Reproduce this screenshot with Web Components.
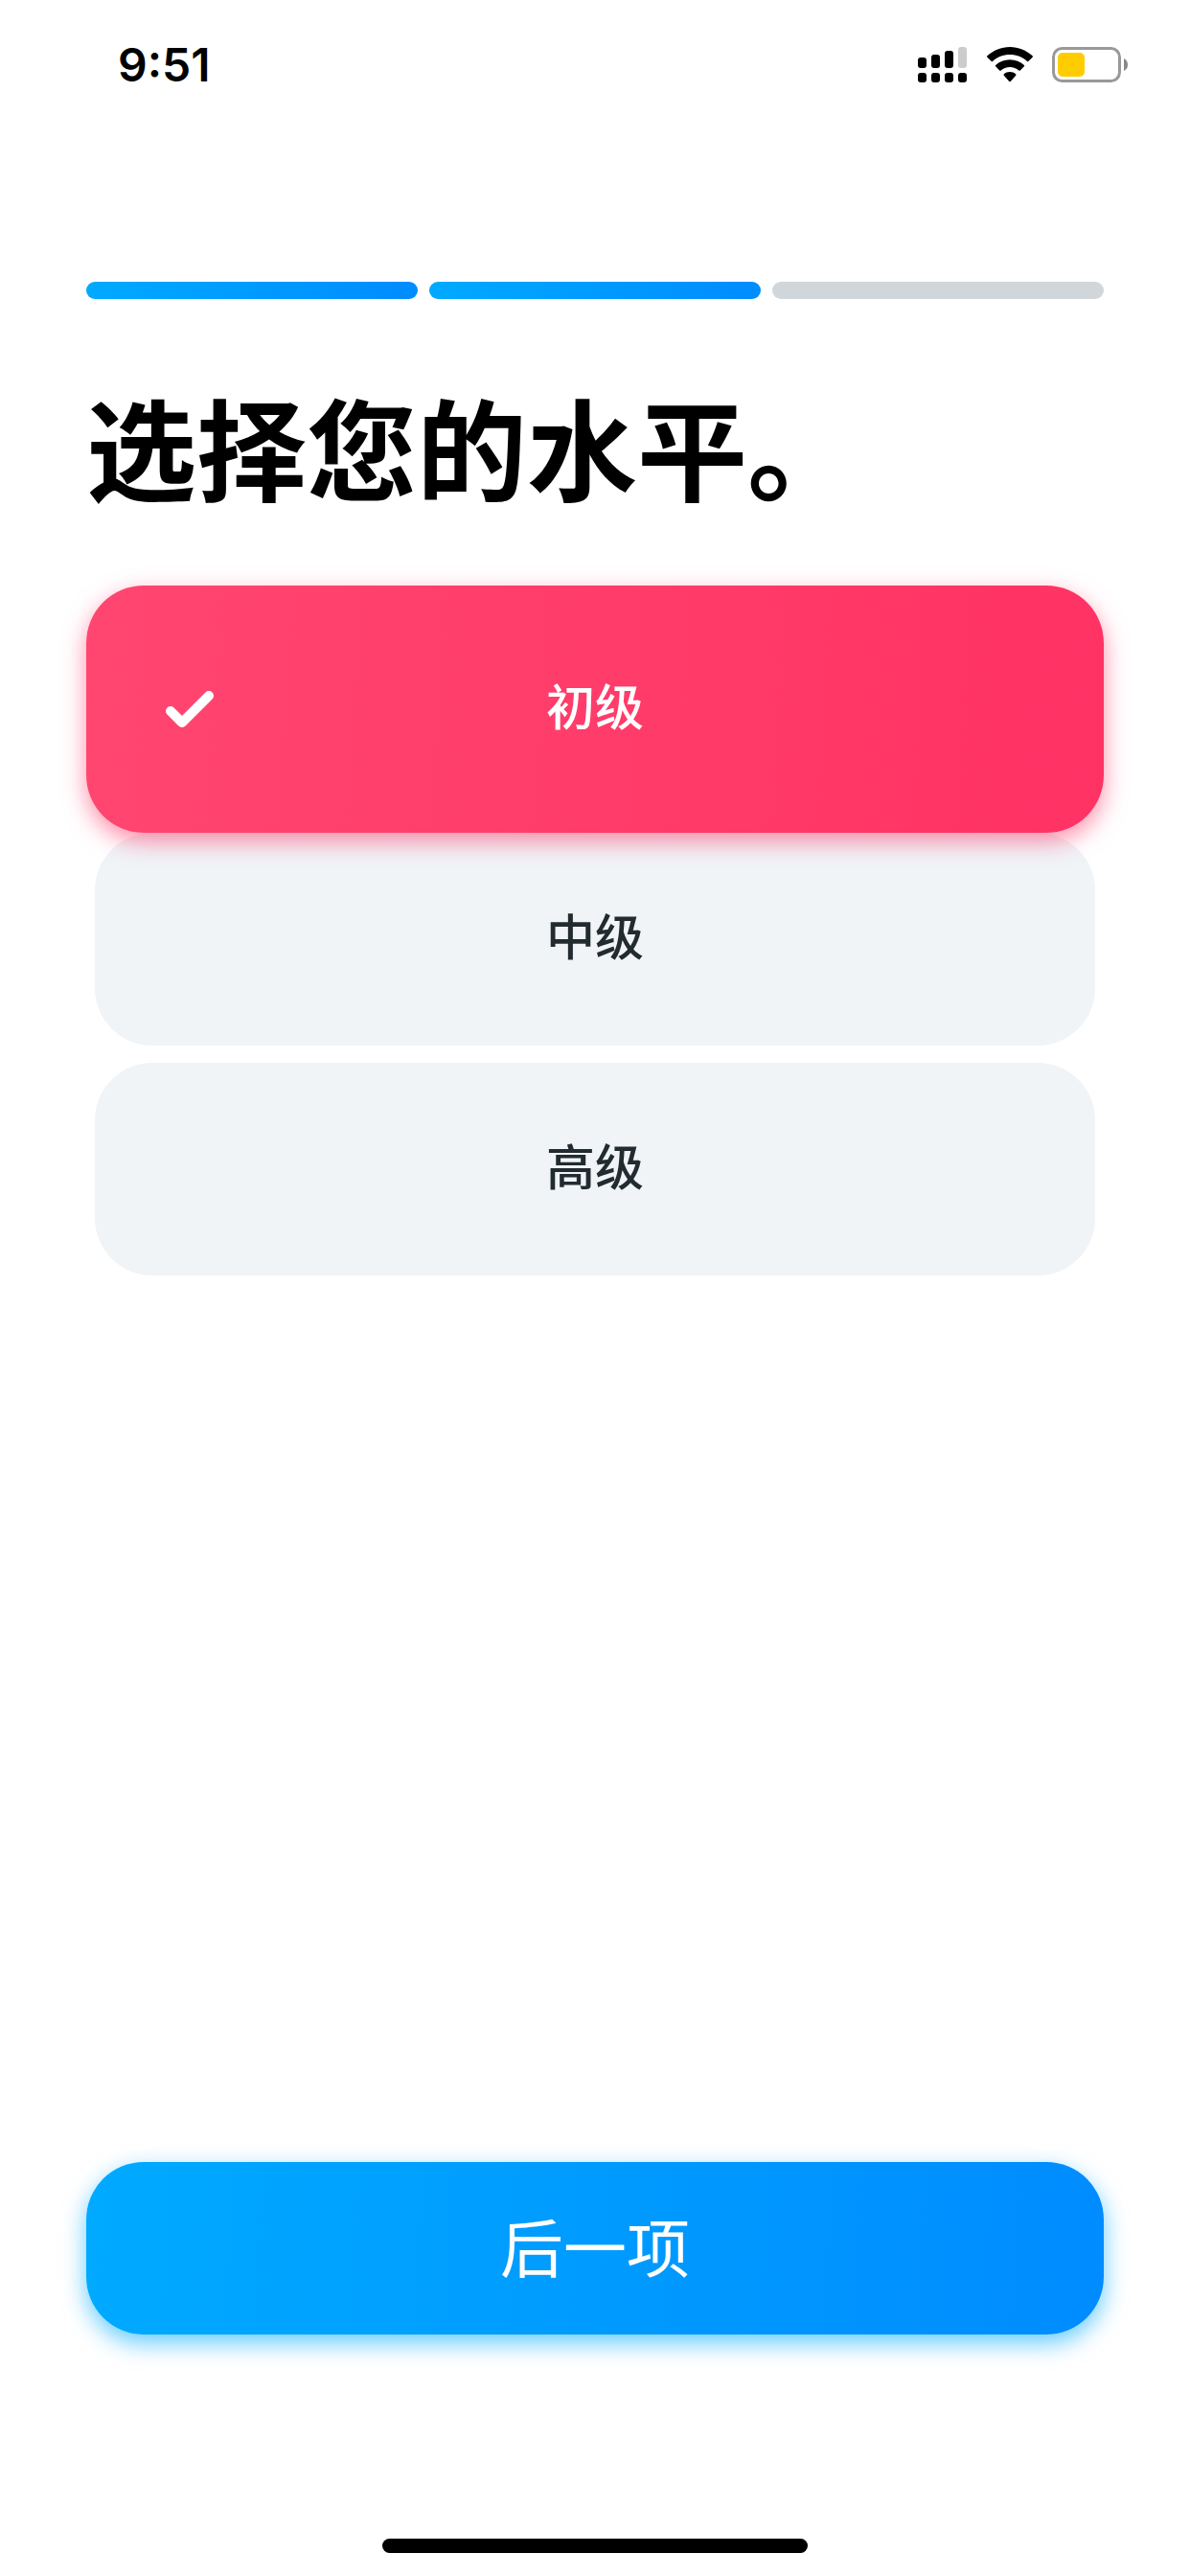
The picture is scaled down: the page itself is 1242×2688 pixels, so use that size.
<!DOCTYPE html>
<html lang="zh-CN">
<head>
<meta charset="utf-8">
<meta name="viewport" content="width=device-width, initial-scale=1">
<title>选择您的水平</title>
<style>
  body {
    margin: 0;
    background: #fff;
    color: #000;
    font-family: "Noto Sans CJK SC", "Noto Sans", sans-serif;
  }
</style>
</head>
<body>
<app-screen>
  <status-bar slot="status">9:51</status-bar>
  <step-progress total="3" current="2"></step-progress>
  <screen-title>选择您的水平。</screen-title>
  <level-picker legend="水平" options="初级,中级,高级" selected="初级"></level-picker>
  <primary-button slot="action">后一项</primary-button>
</app-screen>

<script>
  const define = (name, html, setup) => {
    const template = document.createElement('template');
    template.innerHTML = html;
    customElements.define(name, class extends HTMLElement {
      constructor() {
        super();
        this.attachShadow({ mode: 'open' }).append(template.content.cloneNode(true));
      }
      connectedCallback() {
        if (setup && !this.ready) {
          this.ready = true;
          setup(this, this.shadowRoot);
        }
      }
    });
  };

  define('app-screen', `
    <style>
      :host { display: flex; flex-direction: column; min-height: 100vh; }
      main { flex: 1; display: flex; flex-direction: column; padding: 158px 90px 0; }
      footer { display: flex; flex-direction: column; padding: 0 90px 24px; }
      .home { width: 444px; max-width: 60%; height: 15px; margin: 213px auto 0; border-radius: 8px; background: #000; }
    </style>
    <slot name="status"></slot>
    <main><slot></slot></main>
    <footer><slot name="action"></slot><div class="home"></div></footer>
  `);

  define('status-bar', `
    <style>
      :host { display: flex; align-items: center; justify-content: space-between; height: 136px; box-sizing: border-box; padding: 0 64px 0 123px; font: 600 48px/58px Inter, sans-serif; }
      .icons { display: flex; align-items: center; gap: 20px; }
      svg { display: block; }
    </style>
    <time><slot></slot></time>
    <div class="icons">
      <svg width="52" height="38" viewBox="0 0 52 38" aria-hidden="true">
        <rect x="0" y="11" width="9" height="11" rx="3"/>
        <rect x="14" y="8" width="9" height="14" rx="3"/>
        <rect x="28" y="4" width="9" height="18" rx="3"/>
        <rect x="42" y="0" width="9" height="22" rx="3" fill="#ccc"/>
        <rect x="0" y="27" width="9" height="10" rx="3"/>
        <rect x="14" y="27" width="9" height="10" rx="3"/>
        <rect x="28" y="27" width="9" height="10" rx="3"/>
        <rect x="42" y="27" width="9" height="10" rx="3"/>
      </svg>
      <svg width="48" height="38" viewBox="0 0 48 38" aria-hidden="true">
        <path d="M24 0C15 0 6.800 3.500.400 9.300Q-.300 10 .400 10.700L4.500 14.800Q5.200 15.500 6 14.900C10.800 10.600 17 8 24 8s13.200 2.600 18 6.900q.8.600 1.500-.1l4.100-4.100q.7-.7 0-1.400C41.200 3.500 33 0 24 0z"/>
        <path d="M24 13.200c-5.700 0-10.900 2.200-14.900 5.700q-.7.700 0 1.400l4.100 4.100q.7.700 1.500.1c2.500-2.100 5.800-3.400 9.300-3.400s6.800 1.300 9.300 3.400q.8.600 1.500-.1l4.100-4.100q.7-.7 0-1.400c-4-3.500-9.200-5.700-14.900-5.700z"/>
        <path d="M24 26c-2.400 0-4.500.9-6.200 2.300q-.7.700 0 1.400l5.500 6.200q.7.700 1.400 0l5.500-6.200q.7-.7 0-1.400C28.500 26.900 26.400 26 24 26z"/>
      </svg>
      <svg width="80" height="38" viewBox="0 0 80 38" aria-hidden="true">
        <rect x="1.500" y="1.500" width="69" height="34" rx="9" fill="none" stroke="#999" stroke-width="3"/>
        <rect x="6" y="6" width="28" height="25" rx="5" fill="#fc0"/>
        <path d="M75 12q4 2 4 6.500T75 25z" fill="#888"/>
      </svg>
    </div>
  `);

  define('step-progress', `
    <style>
      :host { display: flex; gap: 12px; }
      i { flex: 1; height: 18px; border-radius: 9px; background: #d1d6da; }
      i.done { background: linear-gradient(100deg, #0af, #008cff); }
    </style>
  `, (host, root) => {
    const total = Number(host.getAttribute('total'));
    const current = Number(host.getAttribute('current'));
    host.setAttribute('role', 'progressbar');
    host.setAttribute('aria-valuemax', total);
    host.setAttribute('aria-valuenow', current);
    for (let n = 1; n <= total; n++) {
      const bar = document.createElement('i');
      if (n <= current) bar.className = 'done';
      root.append(bar);
    }
  });

  define('screen-title', `
    <style>
      :host { display: block; padding: 71px 0 65px; }
      h1 { margin: 0; font-size: 115px; line-height: 163px; font-weight: 700; }
    </style>
    <h1><slot></slot></h1>
  `);

  define('level-picker', `
    <style>
      :host { display: block; }
      fieldset { display: flex; flex-direction: column; gap: 18px; margin: 0; padding: 18px 9px; border: 0; min-width: 0; }
      legend, input { position: absolute; width: 1px; height: 1px; margin: 0; overflow: hidden; clip-path: inset(50%); opacity: 0; }
      label { display: grid; grid-template-columns: 1fr auto 1fr; align-items: center; height: 222px; box-sizing: border-box; padding: 0 83px; border-radius: 60px; background: #f0f4f7; color: #222b2f; font-size: 51px; line-height: 72px; font-weight: 500; cursor: pointer; }
      span { padding-bottom: 10px; }
      svg { display: block; visibility: hidden; }
      label:has(:checked) { z-index: 1; height: 258px; margin: -18px -9px; background: linear-gradient(93deg, #ff4670, #ff3264); color: #fff; box-shadow: 0 9px 24px rgba(255, 50, 100, .55); }
      label:has(:checked) svg { visibility: visible; }
      label:has(:focus-visible) { outline: 4px solid #008cff; }
    </style>
    <fieldset><legend></legend></fieldset>
  `, (host, root) => {
    const fieldset = root.querySelector('fieldset');
    root.querySelector('legend').setAttribute('aria-label', host.getAttribute('legend'));
    for (const name of host.getAttribute('options').split(',')) {
      const label = document.createElement('label');
      label.innerHTML = `
        <svg width="50" height="38" viewBox="0 0 50 38" fill="none" stroke="#fff" stroke-width="10" stroke-linecap="round" stroke-linejoin="round" aria-hidden="true"><path d="M5 21l12 12L45 5"/></svg>
        <span></span><input type="radio" name="level">`;
      label.querySelector('span').textContent = name;
      const input = label.querySelector('input');
      input.value = name;
      input.checked = name === host.getAttribute('selected');
      fieldset.append(label);
    }
  });

  define('primary-button', `
    <style>
      :host { display: block; }
      button { display: block; width: 100%; height: 180px; margin: 0; padding: 0 0 8px; border: 0; border-radius: 60px; background: linear-gradient(93deg, #0af, #008cff); box-shadow: 0 9px 24px rgba(0, 170, 255, .6); color: #fff; font: inherit; font-size: 66px; line-height: 92px; font-weight: 400; cursor: pointer; }
    </style>
    <button type="button"><slot></slot></button>
  `);
</script>
</body>
</html>
